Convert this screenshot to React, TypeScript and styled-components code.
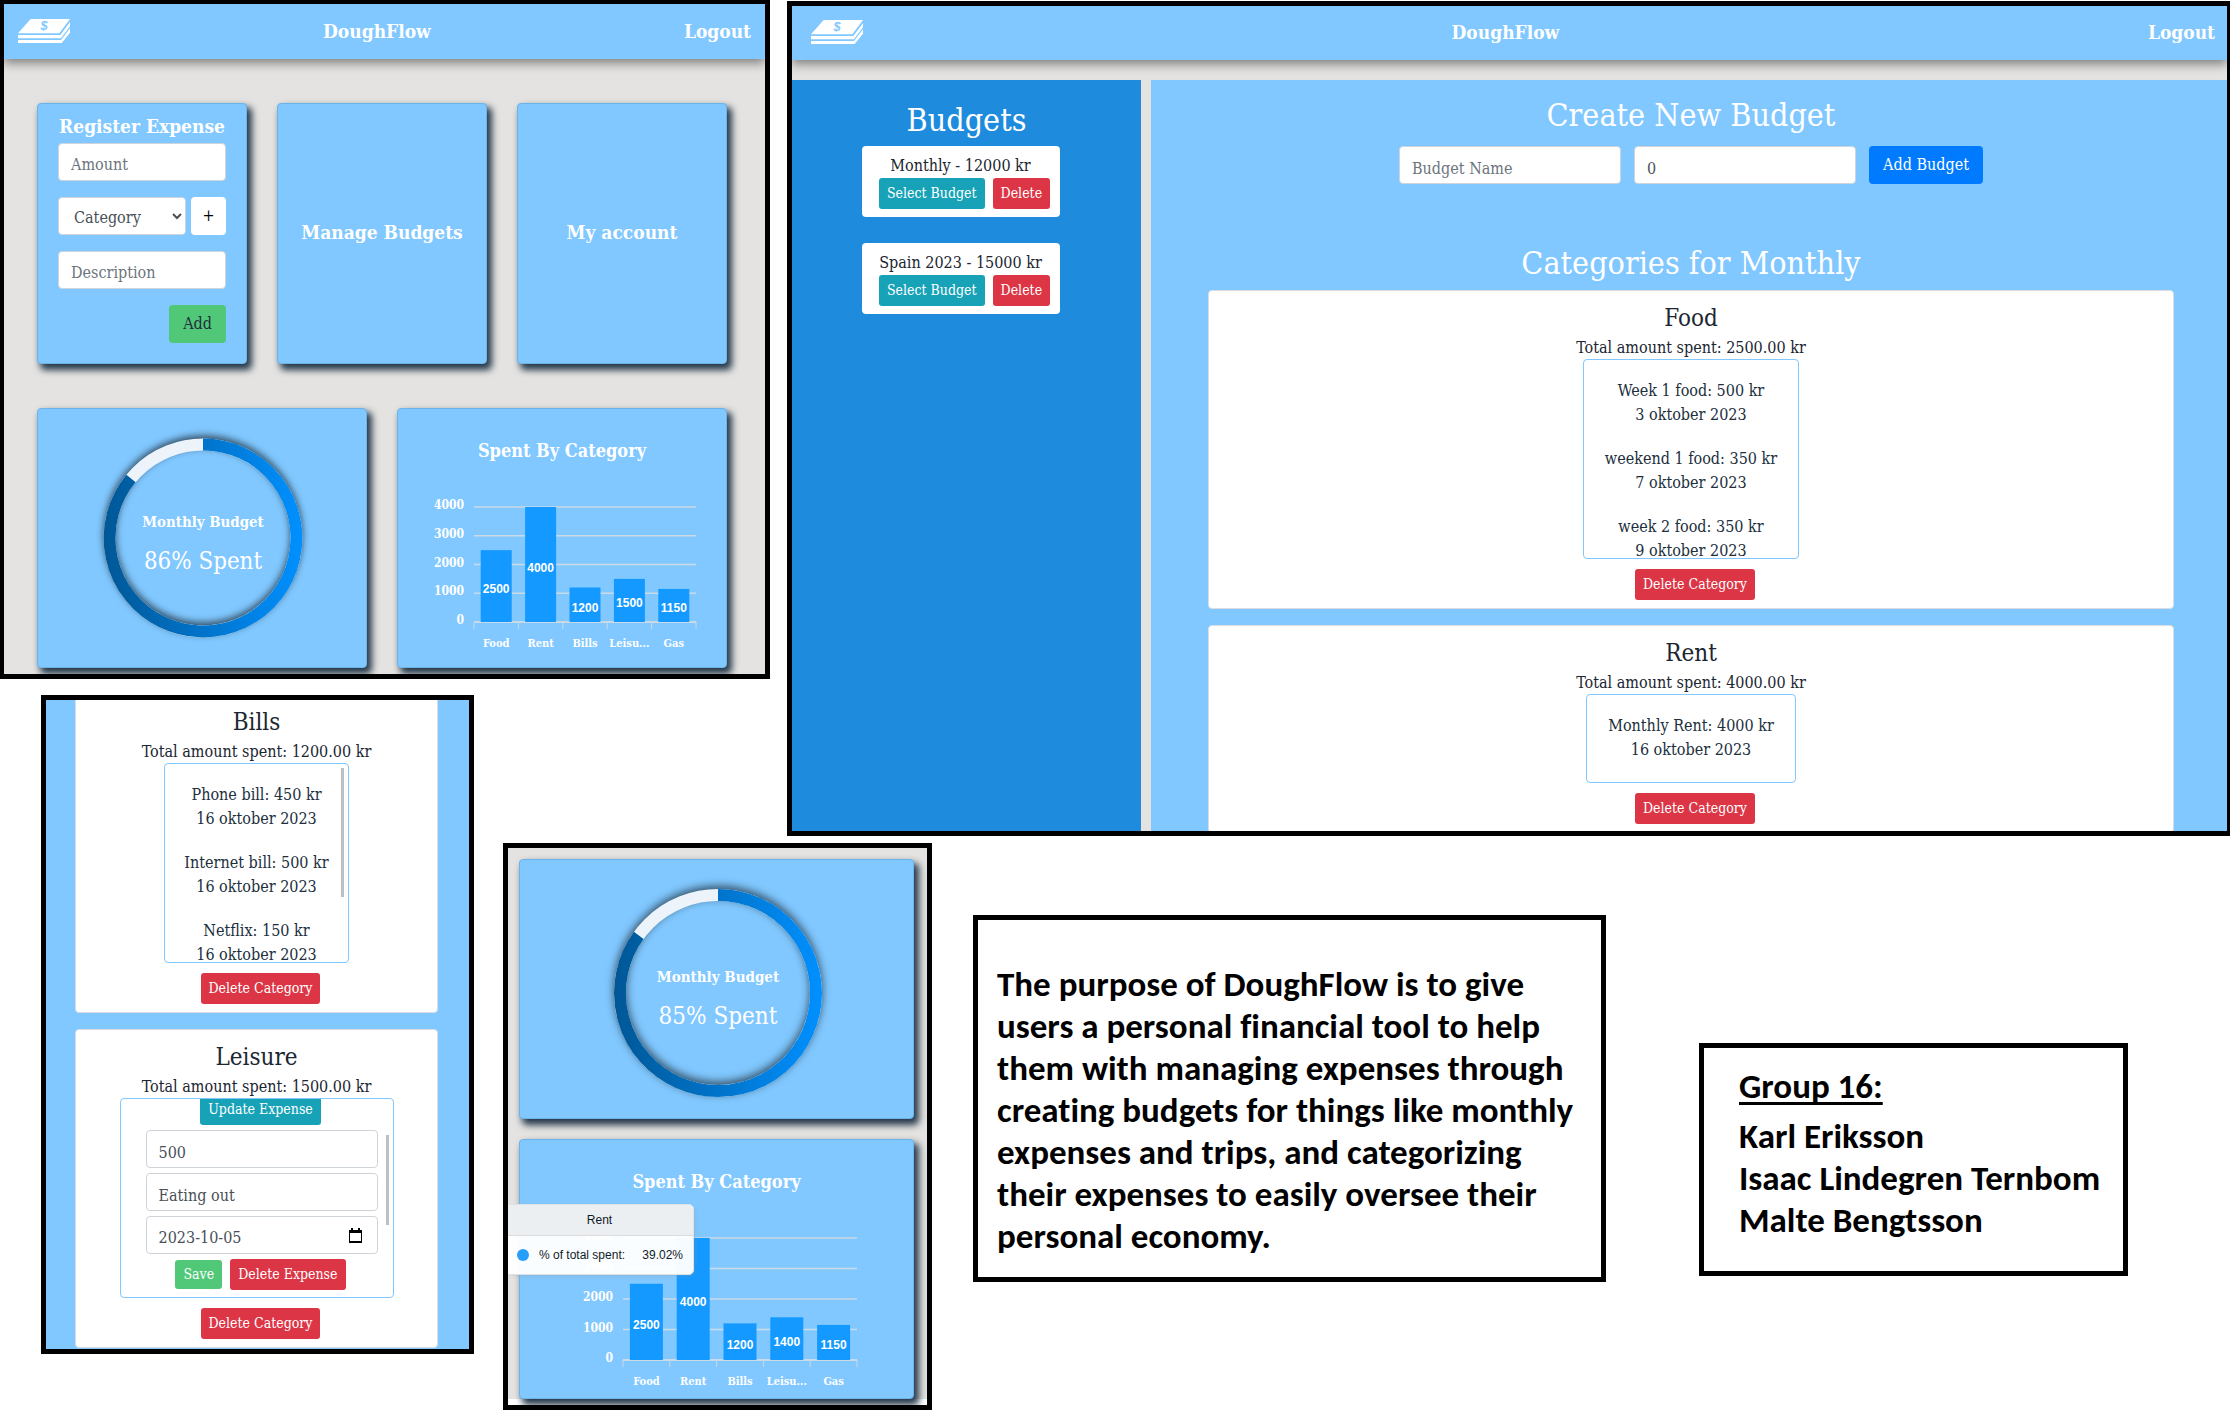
import React from 'react';
import styled, { createGlobalStyle } from 'styled-components';

const slab = '"DejaVu Serif Condensed", "DejaVu Serif", serif';
const sans = '"Liberation Sans", Arial, sans-serif';
const humanist = 'Carlito, Calibri, Lato, sans-serif';

const color = {
  sky: '#80c8ff',
  deep: '#1f8bdd',
  page: '#e4e3e1',
  ink: '#212f3d',
  heading: '#1b2631',
  teal: '#17a2b8',
  red: '#dc3545',
  green: '#50c878',
  blue: '#007bff',
};

const GlobalStyle = createGlobalStyle`
  *, *::before, *::after { box-sizing: border-box; }
  body { margin: 0; background: #fff; font-family: ${slab}; font-size: 16px; line-height: 24px; color: ${color.ink}; }
  h1, h2, h3, p, ul { margin: 0; padding: 0; font-weight: 400; }
  ul { list-style: none; }
  button, input, select { font: inherit; margin: 0; }
`;

/* ---------- board ---------- */

const Board = styled.main`
  display: grid;
  grid-template-columns: 41fr 433fr 29fr 267fr 17fr 145fr 41fr 633fr 93fr 429fr 102fr;
  grid-template-rows: 695px 148px auto;
  align-items: start;
`;

const Panel = styled.section<{ $cols: string; $rows: string; $top?: number; $height?: number; $border?: string }>`
  grid-column: ${p => p.$cols};
  grid-row: ${p => p.$rows};
  min-width: 0;
  margin-top: ${p => p.$top ?? 0}px;
  ${p => p.$height && `height: ${p.$height}px;`}
  border: solid #000;
  border-width: ${p => p.$border ?? '5px'};
  background: #fff;
  overflow: hidden;
`;

const AppPage = styled.div`
  background: ${color.page};
  min-height: 100%;
  display: flex;
  flex-direction: column;
`;

/* ---------- header ---------- */

const Header = styled.header<{ $wide?: boolean }>`
  flex: none;
  height: ${p => (p.$wide ? 54 : 55)}px;
  padding: ${p => (p.$wide ? '0 12px 2px 19px' : '0 14px 2px')};
  display: flex;
  align-items: center;
  justify-content: space-between;
  background: ${color.sky};
  box-shadow: 0 4px 10px rgba(0, 0, 0, 0.45);
  color: #fff;
  font-size: 19px;
  font-weight: 700;
`;

const Brand = styled.h1`
  font-size: 19px;
  font-weight: 700;
`;

const LogoutLink = styled.a`
  color: inherit;
  text-decoration: none;
`;

const CashIcon = () => (
  <svg width="52" height="24" viewBox="0 0 156 72" fill="#fff" aria-hidden="true">
    <path d="M38 0H156L124 43H0Z" />
    <path d="M0 48H127L156 9V22L129 58H0Z" />
    <path d="M0 63H129L156 28V41L131 72H0Z" />
    <text x="78" y="34" fontFamily={sans} fontSize="38" fontWeight="700" fontStyle="italic" textAnchor="middle" fill={color.sky}>$</text>
  </svg>
);

const TopBar = ({ wide }: { wide?: boolean }) => (
  <Header $wide={wide}>
    <CashIcon />
    <Brand>DoughFlow</Brand>
    <LogoutLink href="#logout">Logout</LogoutLink>
  </Header>
);

/* ---------- controls ---------- */

const Field = styled.input<{ $drop?: number }>`
  display: block;
  width: 100%;
  min-width: 0;
  height: 38px;
  padding: ${p => p.$drop ?? 9}px 12px ${p => 12 - (p.$drop ?? 9)}px;
  border: 1px solid #ced4da;
  border-radius: 4px;
  background: #fff;
  color: #495057;
  outline: 0;
  &::placeholder { color: #6c757d; opacity: 1; }
`;

const Picker = styled.select`
  flex: 1;
  min-width: 0;
  height: 38px;
  padding: 6px 3px 4px 11px;
  border: 1px solid #ced4da;
  border-radius: 4px;
  background: #fff;
  color: #495057;
`;

const Button = styled.button<{ $tone: string; $ink?: string }>`
  height: 38px;
  padding: 0 14px;
  border: 0;
  border-radius: 4px;
  background: ${p => p.$tone};
  color: ${p => p.$ink ?? '#fff'};
  white-space: nowrap;
`;

const PlusButton = styled(Button)`
  width: 35px;
  padding: 0;
`;

const SmallButton = styled(Button)`
  height: 31px;
  padding: 0 8px;
  margin-left: 8px;
  font-size: 14px;
  line-height: 21px;
  border-radius: 3px;
`;

const SaveButton = styled(SmallButton)`
  height: 29px;
`;

/* ---------- dashboard ---------- */

const Dashboard = styled.div`
  display: grid;
  gap: 44px;
  padding: 44px 38px 6px 33px;
`;

const TileRow = styled.div<{ $count: number }>`
  display: grid;
  grid-template-columns: repeat(${p => p.$count}, minmax(0, 1fr));
  gap: 30px;
`;

const Tile = styled.div`
  position: relative;
  border: 1px solid #6cb3ea;
  border-radius: 4px;
  background: ${color.sky};
  box-shadow: 4px 5px 7px 1px #24384a;
  color: #fff;
`;

const FormTile = styled(Tile)`
  display: flex;
  flex-direction: column;
  gap: 16px;
  padding: 10px 20px 20px;
`;

const TileTitle = styled.h2`
  font-size: 18px;
  font-weight: 700;
  line-height: 24px;
  text-align: center;
  white-space: nowrap;
`;

const FormTitle = styled(TileTitle)`
  margin: 0 -10px -11px;
  font-size: 19px;
`;

const PickerRow = styled.div`
  display: flex;
  gap: 5px;
`;

const FormEnd = styled.div`
  display: flex;
  justify-content: flex-end;
`;

const LinkTile = styled(Tile).attrs({ as: 'button' })`
  padding: 0 0 4px;
  font-size: 19px;
  font-weight: 700;
`;

const ChartTile = styled(Tile)`
  height: 260px;
`;

const ChartTitle = styled(TileTitle)`
  padding-top: 30px;
`;

const Drawing = styled.svg`
  display: block;
  margin: 0 auto;
  max-width: 100%;
`;

const Ring = styled.g`
  filter: drop-shadow(0 -3px 4px rgba(0, 0, 0, 0.6));
`;

function Gauge({ id, percent, radius, center }: { id: string; percent: number; radius: number; center: number }) {
  const stroke = 12;
  const r = radius - stroke / 2;
  const angle = (percent / 100) * Math.PI * 2;
  const cx = 166;
  const endX = cx + r * Math.sin(angle);
  const endY = center - r * Math.cos(angle);
  return (
    <Drawing width="330" height="258" viewBox="0 0 330 258" role="img" aria-label={`${percent}% spent`}>
      <defs>
        <linearGradient id={id} gradientUnits="userSpaceOnUse" x1={cx - radius} x2={cx + radius} y1="0" y2="0">
          <stop offset="0" stopColor="#005796" />
          <stop offset="1" stopColor="#0090ff" />
        </linearGradient>
      </defs>
      <Ring>
        <circle cx={cx} cy={center} r={r} fill="none" stroke="#ecf3fb" strokeWidth={stroke} />
        <path d={`M${cx} ${center - r}A${r} ${r} 0 1 1 ${endX} ${endY}`} fill="none" stroke={`url(#${id})`} strokeWidth={stroke} />
      </Ring>
      <text x={cx} y={center - 11} textAnchor="middle" fill="#fff" fontSize="15" fontWeight="700">Monthly Budget</text>
      <text x={cx} y={center + 31} textAnchor="middle" fill="#fff" fontSize="24">{percent}% Spent</text>
    </Drawing>
  );
}

type Bar = [string, number];

function BarChart({ bars, width, left, step, base }: { bars: Bar[]; width: number; left: number; step: number; base: number }) {
  const top = 44;
  const y = (v: number) => base - (v / 4000) * (base - top);
  const right = left + step * bars.length;
  const barWidth = Math.round(step * 0.7);
  return (
    <Drawing width={width} height="203" viewBox={`0 0 ${width} 203`} role="img" aria-label="Spent by category">
      {[4000, 3000, 2000, 1000, 0].map(v => (
        <g key={v}>
          <line x1={left} x2={right} y1={y(v)} y2={y(v)} stroke="#c9dae6" strokeWidth={v === 0 ? 2 : 1.4} />
          <text x={left - 10} y={y(v) + 2} textAnchor="end" fill="#fff" fontSize="12" fontWeight="700">{v}</text>
        </g>
      ))}
      {[...bars, null].map((_, i) => (
        <line key={i} x1={left + i * step} x2={left + i * step} y1={base} y2={base + 7} stroke="#c9dae6" />
      ))}
      {bars.map(([name, value], i) => {
        const mid = left + step * (i + 0.5);
        return (
          <g key={name}>
            <rect x={mid - barWidth / 2} y={y(value)} width={barWidth} height={base - y(value)} fill="#1399ff" />
            <text x={mid} y={(y(value) + base) / 2 + 7} textAnchor="middle" fill="#fff" fontFamily={sans} fontSize="12" fontWeight="700">{value}</text>
            <text x={mid} y={base + 25} textAnchor="middle" fill="#fff" fontSize="11" fontWeight="700">{name}</text>
          </g>
        );
      })}
    </Drawing>
  );
}

const spending = (leisure: number): Bar[] => [['Food', 2500], ['Rent', 4000], ['Bills', 1200], ['Leisu...', leisure], ['Gas', 1150]];

/* ---------- budgets page ---------- */

const BudgetsPage = styled.div`
  flex: 1;
  margin-top: 20px;
  display: grid;
  grid-template-columns: 349fr 1076fr;
  gap: 10px;
`;

const Sidebar = styled.aside`
  padding-top: 21px;
  background: ${color.deep};
  display: flex;
  flex-direction: column;
  align-items: center;
`;

const PageTitle = styled.h2<{ $below: number }>`
  margin-bottom: ${p => p.$below}px;
  font-size: 32px;
  line-height: 38px;
  color: #fff;
  text-align: center;
`;

const BudgetList = styled.ul`
  display: grid;
  gap: 26px;
  margin-right: 12px;
`;

const BudgetItem = styled.li`
  min-width: 198px;
  padding: 8px;
  border-radius: 4px;
  background: #fff;
  color: ${color.heading};
  text-align: center;
  white-space: nowrap;
`;

const ButtonRow = styled.div`
  display: flex;
  justify-content: center;
  align-items: center;
`;

const Content = styled.div`
  padding: 16px 53px 0 57px;
  background: ${color.sky};
  min-width: 0;
`;

const CreateForm = styled.form`
  display: flex;
  justify-content: center;
  gap: 13px;
  margin-bottom: 60px;
`;

const FieldBox = styled.div`
  width: 222px;
`;

const CategoryStack = styled.div`
  display: grid;
  gap: 16px;
`;

const CategoryCard = styled.article`
  padding: 13px 0 8px;
  border: 1px solid #d9dde1;
  border-radius: 4px;
  background: #fff;
  display: flex;
  flex-direction: column;
  align-items: center;
  color: ${color.heading};
`;

const CategoryName = styled.h3`
  margin-bottom: 3px;
  font-size: 24px;
  line-height: 29px;
`;

const ExpenseBox = styled.div<{ $width: number }>`
  position: relative;
  width: ${p => p.$width}px;
  max-height: 200px;
  margin: -1px 0 10px;
  border: 1px solid ${color.sky};
  border-radius: 4px;
  overflow: hidden;
  text-align: center;
`;

const ExpenseList = styled.ul`
  padding-top: 19px;
`;

const Expense = styled.li`
  padding-bottom: 20px;
  color: ${color.ink};
`;

const ScrollThumb = styled.span<{ $top: number; $length: number }>`
  position: absolute;
  top: ${p => p.$top}px;
  right: 4px;
  width: 3px;
  height: ${p => p.$length}px;
  background: #bfbfbf;
`;

const EditForm = styled.form`
  display: grid;
  gap: 5px;
  margin-top: -5px;
  padding: 0 15px 8px 25px;
`;

const EditActions = styled(ButtonRow)`
  margin-left: -10px;
`;

const DateBox = styled.div`
  position: relative;
`;

const CalendarMark = styled.svg`
  position: absolute;
  right: 16px;
  top: 12px;
`;

interface CategoryProps {
  name: string;
  total: string;
  width: number;
  children: React.ReactNode;
}

const Category = ({ name, total, width, children }: CategoryProps) => (
  <CategoryCard>
    <CategoryName>{name}</CategoryName>
    <p>Total amount spent: {total} kr</p>
    <ExpenseBox $width={width}>{children}</ExpenseBox>
    <SmallButton type="button" $tone={color.red}>Delete Category</SmallButton>
  </CategoryCard>
);

const Expenses = ({ items }: { items: [string, string][] }) => (
  <ExpenseList>
    {items.map(([text, date]) => (
      <Expense key={text}>
        <p>{text}</p>
        <p>{date}</p>
      </Expense>
    ))}
  </ExpenseList>
);

const PhonePage = styled.div`
  margin-top: -6px;
  padding: 0 31px 1px 29px;
  background: ${color.sky};
`;

/* ---------- narrow dashboard ---------- */

const NarrowDashboard = styled.div`
  display: grid;
  gap: 20px;
  margin-bottom: 6px;
  padding: 11px 13px 0 11px;
  background: ${color.page};
`;

const Tooltip = styled.div`
  position: absolute;
  top: 64px;
  left: -15px;
  width: 189px;
  border: 1px solid #dfe2e4;
  border-radius: 5px;
  background: rgba(255, 255, 255, 0.96);
  box-shadow: 2px 2px 6px -4px #999;
  overflow: hidden;
  font: 12px/17px ${sans};
  color: #111c26;
`;

const TooltipTitle = styled.div`
  padding: 7px 0 6px;
  border-bottom: 1px solid #ddd;
  background: #eceff1;
  text-align: center;
`;

const TooltipRow = styled.div`
  display: flex;
  align-items: center;
  gap: 10px;
  height: 38px;
  padding: 0 10px 0 11px;
`;

const TooltipValue = styled.span`
  margin-left: auto;
`;

const Dot = styled.span`
  width: 12px;
  height: 12px;
  border-radius: 50%;
  background: #269ffb;
`;

/* ---------- captions ---------- */

const Caption = styled.div<{ $pad: string }>`
  padding: ${p => p.$pad};
  font-family: ${humanist};
  font-size: 35px;
  font-weight: 700;
  line-height: 42px;
  font-variant-ligatures: none;
  color: #000;
  p, h2 { font-weight: 700; font-size: 35px; }
`;

const GroupTitle = styled.h2`
  margin-bottom: 8px;
  text-decoration: underline;
  text-decoration-thickness: 3px;
  text-underline-offset: 4px;
  text-decoration-skip-ink: none;
`;

export default function App() {
  return (
    <>
      <GlobalStyle />
      <Board>
        <Panel $cols="1 / 5" $rows="1" $border="4px 5px 5px 4px">
          <AppPage>
            <TopBar />
            <Dashboard>
              <TileRow $count={3}>
                <FormTile>
                  <FormTitle>Register Expense</FormTitle>
                  <Field $drop={8} aria-label="Amount" placeholder="Amount" />
                  <PickerRow>
                    <Picker aria-label="Category" defaultValue="Category">
                      <option>Category</option>
                    </Picker>
                    <PlusButton type="button" $tone="#fff" $ink="#000" aria-label="Add category">+</PlusButton>
                  </PickerRow>
                  <Field $drop={8} aria-label="Description" placeholder="Description" />
                  <FormEnd>
                    <Button type="button" $tone={color.green} $ink={color.ink}>Add</Button>
                  </FormEnd>
                </FormTile>
                <LinkTile>Manage Budgets</LinkTile>
                <LinkTile>My account</LinkTile>
              </TileRow>
              <TileRow $count={2}>
                <ChartTile>
                  <Gauge id="wideGauge" percent={86} radius={100} center={129} />
                </ChartTile>
                <ChartTile>
                  <ChartTitle>Spent By Category</ChartTitle>
                  <BarChart bars={spending(1500)} width={328} left={76} step={44.4} base={159} />
                </ChartTile>
              </TileRow>
            </Dashboard>
          </AppPage>
        </Panel>

        <Panel $cols="6 / 12" $rows="1 / 3" $top={1} $height={835} $border="5px 3px 5px 5px">
          <AppPage>
            <TopBar wide />
            <BudgetsPage>
              <Sidebar>
                <PageTitle $below={7}>Budgets</PageTitle>
                <BudgetList>
                  {['Monthly - 12000 kr', 'Spain 2023 - 15000 kr'].map(text => (
                    <BudgetItem key={text}>
                      <p>{text}</p>
                      <ButtonRow>
                        <SmallButton type="button" $tone={color.teal}>Select Budget</SmallButton>
                        <SmallButton type="button" $tone={color.red}>Delete</SmallButton>
                      </ButtonRow>
                    </BudgetItem>
                  ))}
                </BudgetList>
              </Sidebar>
              <Content>
                <PageTitle $below={12}>Create New Budget</PageTitle>
                <CreateForm>
                  <FieldBox><Field aria-label="Budget name" placeholder="Budget Name" /></FieldBox>
                  <FieldBox><Field aria-label="Budget amount" defaultValue="0" /></FieldBox>
                  <Button type="button" $tone={color.blue}>Add Budget</Button>
                </CreateForm>
                <PageTitle $below={8}>Categories for Monthly</PageTitle>
                <CategoryStack>
                  <Category name="Food" total="2500.00" width={216}>
                    <Expenses items={[
                      ['Week 1 food: 500 kr', '3 oktober 2023'],
                      ['weekend 1 food: 350 kr', '7 oktober 2023'],
                      ['week 2 food: 350 kr', '9 oktober 2023'],
                    ]} />
                  </Category>
                  <Category name="Rent" total="4000.00" width={210}>
                    <Expenses items={[['Monthly Rent: 4000 kr', '16 oktober 2023']]} />
                  </Category>
                </CategoryStack>
              </Content>
            </BudgetsPage>
          </AppPage>
        </Panel>

        <Panel $cols="2 / 3" $rows="2 / 4" $height={659}>
          <PhonePage>
            <CategoryStack>
              <Category name="Bills" total="1200.00" width={185}>
                <Expenses items={[
                  ['Phone bill: 450 kr', '16 oktober 2023'],
                  ['Internet bill: 500 kr', '16 oktober 2023'],
                  ['Netflix: 150 kr', '16 oktober 2023'],
                ]} />
                <ScrollThumb $top={4} $length={129} />
              </Category>
              <Category name="Leisure" total="1500.00" width={274}>
                <EditForm>
                  <EditActions>
                    <SmallButton type="button" $tone={color.teal}>Update Expense</SmallButton>
                  </EditActions>
                  <Field aria-label="Expense amount" defaultValue="500" />
                  <Field aria-label="Expense description" defaultValue="Eating out" />
                  <DateBox>
                    <Field $drop={8} aria-label="Expense date" defaultValue="2023-10-05" />
                    <CalendarMark width="13" height="15" viewBox="0 0 13 15" aria-hidden="true">
                      <path d="M2 0H4V2H9V0H11V2H13V15H0V2H2ZM1 5V13H12V5Z" fill="#000" fillRule="evenodd" />
                    </CalendarMark>
                  </DateBox>
                  <EditActions>
                    <SaveButton type="button" $tone={color.green}>Save</SaveButton>
                    <SmallButton type="button" $tone={color.red}>Delete Expense</SmallButton>
                  </EditActions>
                </EditForm>
                <ScrollThumb $top={36} $length={90} />
              </Category>
            </CategoryStack>
          </PhonePage>
        </Panel>

        <Panel $cols="4 / 7" $rows="3">
          <NarrowDashboard>
            <ChartTile>
              <Gauge id="narrowGauge" percent={85} radius={104} center={133} />
            </ChartTile>
            <ChartTile>
              <ChartTitle>Spent By Category</ChartTitle>
              <BarChart bars={spending(1400)} width={393} left={103} step={46.8} base={166} />
              <Tooltip role="tooltip">
                <TooltipTitle>Rent</TooltipTitle>
                <TooltipRow>
                  <Dot />
                  <span>% of total spent:</span>
                  <TooltipValue>39.02%</TooltipValue>
                </TooltipRow>
              </Tooltip>
            </ChartTile>
          </NarrowDashboard>
        </Panel>

        <Panel $cols="8 / 9" $rows="3" $top={72}>
          <Caption $pad="43px 20px 20px 19px">
            <p>
              The purpose of DoughFlow is to give users a personal financial tool to help them with managing expenses
              through creating budgets for things like monthly expenses and trips, and categorizing their expenses to
              easily oversee their personal economy.
            </p>
          </Caption>
        </Panel>

        <Panel $cols="10 / 11" $rows="3" $top={200}>
          <Caption $pad="17px 10px 30px 35px">
            <GroupTitle>Group 16:</GroupTitle>
            <p>Karl Eriksson</p>
            <p>Isaac Lindegren Ternbom</p>
            <p>Malte Bengtsson</p>
          </Caption>
        </Panel>
      </Board>
    </>
  );
}
